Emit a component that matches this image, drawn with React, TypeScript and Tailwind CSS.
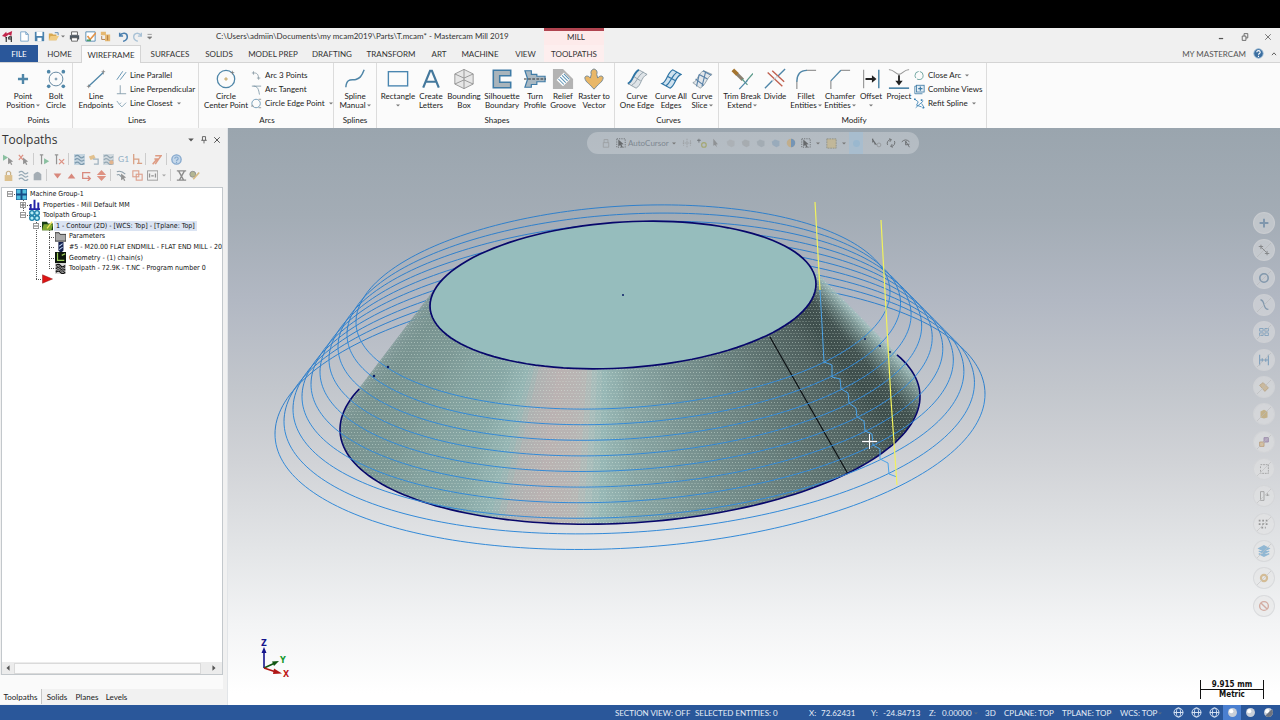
import React from "react";

type Ellipse = { cx: number; cy: number; w: number; skew: number; h: number };

const TOP: Ellipse = { cx: 623, cy: 295, w: 193, skew: -11, h: 73 };
const BASE: Ellipse = { cx: 630, cy: 413, w: 290, skew: -16.5, h: 110 };
const PASSES: Ellipse[] = Array.from({ length: 10 }, (_, i) => {
  const k = i / 9;
  return { cx: 623 + 7 * k, cy: 307 + 107 * k, w: 267 + 88 * k, skew: -15 - 5 * k, h: 101 + 33 * k };
});

const at = (e: Ellipse, deg: number) => {
  const t = (deg * Math.PI) / 180;
  const u = Math.cos(t);
  const v = Math.sin(t);
  return [e.cx + e.w * u, e.cy + e.skew * u + e.h * v];
};
const arc = (e: Ellipse, from: number, to: number) => {
  const n = 120;
  return Array.from({ length: n + 1 }, (_, i) => {
    const [x, y] = at(e, from + ((to - from) * i) / n);
    return `${i ? "L" : "M"}${x.toFixed(2)} ${y.toFixed(2)}`;
  }).join("");
};

const SHADES: [number, number[]][] = [
  [-20, [164, 188, 190]],
  [-14, [160, 190, 190]],
  [-6, [140, 168, 166]],
  [2, [106, 130, 128]],
  [11, [66, 82, 80]],
  [20, [62, 78, 76]],
  [30, [78, 95, 93]],
  [45, [92, 112, 110]],
  [60, [108, 131, 129]],
  [75, [122, 148, 146]],
  [88, [138, 166, 164]],
  [95, [152, 184, 182]],
  [98, [170, 188, 186]],
  [101, [184, 182, 180]],
  [108, [186, 178, 178]],
  [114, [176, 178, 178]],
  [118, [150, 182, 180]],
  [126, [136, 168, 166]],
  [138, [132, 162, 159]],
  [150, [124, 152, 149]],
  [170, [120, 147, 144]],
  [197, [126, 152, 150]],
];
const shade = (deg: number) => {
  let i = 0;
  while (i < SHADES.length - 2 && SHADES[i + 1][0] < deg) i++;
  const [a, ca] = SHADES[i];
  const [b, cb] = SHADES[i + 1];
  const k = Math.min(1, Math.max(0, (deg - a) / (b - a)));
  const c = ca.map((v, j) => Math.round(v + (cb[j] - v) * k));
  return `rgb(${c.join(",")})`;
};
const FACETS = Array.from({ length: 144 }, (_, i) => {
  const a = -19.3 + i * 1.5;
  const b = Math.min(196.7, a + 1.8);
  const pts = [at(TOP, a), at(BASE, a), at(BASE, b), at(TOP, b)];
  return { points: pts.map((p) => p.map((n) => n.toFixed(1)).join(",")).join(" "), fill: shade(a) };
});
const SIDE = `${arc(BASE, -19.3, 196.7)}${arc(TOP, 196.7, -19.3).replace("M", "L")}Z`;

function Model() {
  return (
    <svg className="block h-full w-full" viewBox="228 128 1052 577" role="img" aria-label="Part with toolpath">
      <defs>
        <pattern id="dots" width="6" height="6" patternUnits="userSpaceOnUse">
          <path d="M0 0h1v1h-1zM3 0h1v1h-1zM1.500 3h1v1h-1zM4.500 3h1v1h-1z" fill="#dff0e4" />
        </pattern>
      </defs>
      <g fill="none" stroke="#2f80cc" strokeWidth="1">
        {PASSES.map((p, i) => (
          <path key={i} d={arc(p, 180, 360)} />
        ))}
      </g>
      {FACETS.map((f, i) => (
        <polygon key={i} points={f.points} fill={f.fill} />
      ))}
      <path d={SIDE} fill="url(#dots)" opacity="0.42" />
      <path d={arc(BASE, -23, 201)} fill="none" stroke="#07076b" strokeWidth="1.600" />
      <path d={arc(TOP, 0, 360)} fill="#96bdbd" stroke="#07076b" strokeWidth="1.700" />
      <path d="M770 337L848 474" stroke="#0b0f12" strokeWidth="1.200" />
      <g fill="none" stroke="#338ad8" strokeWidth="1">
        {PASSES.map((p, i) => (
          <path key={i} d={arc(p, 0, 180)} />
        ))}
        <path
          stroke="#4ba3e8"
          d="M820 290L822 325L824 362L832 365V377L840 379L841 389L848 393L849 403L856 408L857 417L864 421L865 431L872 434L873 445L880 449V459L888 463L889 474L897 477"
        />
      </g>
      <path d="M815 202L820 290M881 220L891 400L897 485" fill="none" stroke="#f1f25c" strokeWidth="1.200" />
      <g fill="#0a1c66">
        <circle cx="623" cy="295" r="1" />
        <circle cx="388" cy="367" r="1.200" />
        <circle cx="374" cy="376" r="1.200" />
        <circle cx="865" cy="339" r="1" />
        <circle cx="880" cy="346" r="1" />
        <circle cx="890" cy="352" r="1" />
      </g>
      <path d="M862 441.500H877M869.500 434V449" stroke="#1c2426" strokeWidth="3" opacity="0.5" />
      <path d="M862 441.500H877M869.500 434V449" stroke="#fff" strokeWidth="1.300" />
    </svg>
  );
}

/* ---------- icons ---------- */

const S = "#4f86a8";
const big: Record<string, React.ReactNode> = {
  point: <path d="M12 6.500v11M6.500 12h11" stroke={S} strokeWidth="2.600" />,
  bolt: (
    <g stroke="#5a7f9a" fill="none">
      <circle cx="12" cy="12" r="7.500" />
      <path d="M12 10.500v3M10.500 12h3" />
      <g fill={S} stroke="none">
        <circle cx="4" cy="4" r="2" />
        <circle cx="20" cy="4" r="2" />
        <circle cx="4" cy="20" r="2" />
        <circle cx="20" cy="20" r="2" />
      </g>
    </g>
  ),
  line: (
    <g stroke={S}>
      <path d="M4 20L20 5" strokeWidth="1.400" />
      <path d="M18 4h4M20 2v5M2 20h4M4 18v4" stroke="#777" strokeWidth=".8" />
    </g>
  ),
  circle: (
    <g fill="none" stroke={S}>
      <circle cx="12" cy="12" r="9.500" strokeWidth="1.400" />
      <path d="M12 10v4M10 12h4" stroke="#c09a50" />
      <path d="M19 3v4M17 5h4" stroke="#777" strokeWidth=".8" />
    </g>
  ),
  spline: <path d="M2 21C3 10 9 14 13 12.500S19 10 22 2" fill="none" stroke={S} strokeWidth="1.600" />,
  rect: <rect x="1.500" y="4" width="21" height="15.500" fill="none" stroke="#4a86b0" strokeWidth="1.500" />,
  letter: <path d="M3.500 21.500L11 3H13L20.500 21.500M6.500 15H17.500" fill="none" stroke="#44789c" strokeWidth="2.400" />,
  box: (
    <g fill="#e6e6e6" stroke="#8b8b8b" strokeWidth=".9">
      <path d="M12 1.500L22 6.500V17.500L12 22.500L2 17.500V6.500Z" />
      <path d="M2 6.500L12 11L22 6.500M12 11V22.500M2 17.500L12 13L22 17.500M12 1.500V11" fill="none" />
    </g>
  ),
  silhouette: (
    <path d="M2.500 2.500H21.500V8.500H9.500V15.500H21.500V21.500H2.500Z" fill="#a9b4bb" stroke="#3f7ba6" strokeWidth="1.700" />
  ),
  turn: (
    <g>
      <path d="M1 3H8V7H14V9H23V15H14V18H8V21H1L4 12Z" fill="#a9b8c2" stroke="#3f7ba6" strokeWidth="1.300" />
      <path d="M0 12H24" stroke="#333" strokeDasharray="3 1.500" strokeWidth="1.200" />
    </g>
  ),
  relief: (
    <g>
      <path d="M1 1H12L23 12V23H1Z" fill="#b3b3b3" />
      <path d="M5 13L13 5L20 12L12 20Z" fill="#fff" />
      <path d="M7 12l6 6M9 10l6 6M11 8l6 6M13 6.500l6 6" stroke="#5c93b5" strokeWidth="1.100" />
    </g>
  ),
  raster: (
    <path
      d="M12 1C15 2 16 4 15 7L16 11C18 8 22 8 22 11C21 16 17 17 16 19C14 20 14 22 12 23C10 22 10 20 8 19C7 17 3 16 2 11C2 8 6 8 8 11L9 7C8 4 9 2 12 1Z"
      fill="#e9b767"
      stroke="#6d8291"
      strokeWidth="1"
    />
  ),
  curve1: (
    <g fill="#dfe4e8" stroke="#8796a0" strokeWidth=".9">
      <path d="M2 17C8 15 7 6 14 2L23 7C16 10 17 19 11 22Z" />
      <path d="M6 19C12 16 12 9 19 4.500M8 9L16 14" fill="none" />
      <path d="M2 17C8 15 7 6 14 2" fill="none" stroke="#2f75a5" strokeWidth="2" />
    </g>
  ),
  curve2: (
    <g fill="#cfe2ef" stroke="#2f75a5" strokeWidth="1.300">
      <path d="M2 17C8 15 7 6 14 2L23 7C16 10 17 19 11 22Z" />
      <path d="M6.500 19.500C12 16 12 9 18.500 4.500M8 9L17 14" fill="none" />
    </g>
  ),
  curve3: (
    <g fill="#e2e6ea" stroke="#8796a0" strokeWidth=".9">
      <path d="M2 16C8 14 7 6 14 3L23 7C17 10 17 18 10 22Z" />
      <path d="M5 12l9 7M9 7l9 5M13 3l9 5M9 7l-3 13M16 4l-4 16" fill="none" stroke="#5781a8" strokeWidth="1.200" />
    </g>
  ),
  trim: (
    <g fill="none">
      <path d="M6 6L13 13" stroke="#8b8070" strokeWidth="3.600" />
      <path d="M2 2L7 7" stroke="#a5752f" strokeWidth="4" />
      <path d="M12 12L18 18.500M17 14L24 6" stroke="#5a9a8a" strokeWidth="1.300" />
      <path d="M9 23L18 13.500" stroke={S} strokeWidth="1.400" />
    </g>
  ),
  divide: (
    <g strokeWidth="1.500" fill="none">
      <path d="M1 22L9 14M15 9L23 1" stroke={S} />
      <path d="M4 5L20 20M9 3L22 15" stroke="#c0604f" />
      <path d="M9 14L15 9" stroke="#b9c7ce" strokeDasharray="2 1" />
    </g>
  ),
  fillet: (
    <g fill="none" strokeWidth="1.400">
      <path d="M2 23V14M12 2.500H23" stroke="#999" />
      <path d="M2 15C2 7 6 2.500 13 2.500" stroke={S} />
    </g>
  ),
  chamfer: (
    <g fill="none" strokeWidth="1.400">
      <path d="M2 23V14M13 2.500H23" stroke="#999" />
      <path d="M2 14L13 2.500" stroke={S} />
    </g>
  ),
  offset: (
    <g>
      <path d="M4 2V22" stroke="#888" strokeWidth="1.100" />
      <path d="M20.500 2V22" stroke={S} strokeWidth="1.600" />
      <path d="M6 11H13V8L18 12L13 16V13H6Z" fill="#222" />
    </g>
  ),
  project: (
    <g>
      <path d="M1 2C6 1 8 7 12 7S18 1 23 2" fill="none" stroke="#999" strokeWidth="1.200" />
      <path d="M11 8H13V14H16L12 19L8 14H11Z" fill="#222" />
      <path d="M1 22H23" stroke={S} strokeWidth="1.800" />
    </g>
  ),
};

const small: Record<string, React.ReactNode> = {
  parallel: <path d="M1 11L8 1M5 11L12 2" stroke={S} fill="none" />,
  perp: <path d="M1 11H12M5 1V11" stroke="#7d97a6" fill="none" />,
  closest: <path d="M1 3L4 7L7 10M7 10L12 5M4 7L6 5" stroke="#7f9fb2" fill="none" />,
  arc3: <path d="M1 3H4C8 3 9 6 9 11M7 9h4M3 1v4" stroke="#8b9ba6" fill="none" />,
  arct: <path d="M1 2H12M3 2C8 2 9 6 10 12" stroke="#7d97a6" fill="none" />,
  edge: (
    <g fill="none" stroke="#6592af">
      <circle cx="6" cy="6" r="5" />
      <path d="M0 9h3M9 1h3M9 11h3" stroke="#888" />
    </g>
  ),
  closearc: <circle cx="6" cy="6" r="4.800" fill="none" stroke="#5e9a94" strokeDasharray="10 1.500" />,
  combine: (
    <g fill="none" stroke="#3f7ba6">
      <path d="M1 11V2H3M1 11H10" />
      <rect x="3" y="1" width="9" height="8" fill="#e4eef5" />
      <path d="M7.500 2.500v5M5 5h5" strokeWidth="1.400" />
    </g>
  ),
  refit: (
    <g fill="none" stroke="#3f84b5">
      <path d="M1 1L5 4L3 8L9 10M2 11L11 3M9 6l3 5" />
      <path d="M0 1h2M10 11h2M8 2h2" strokeWidth="2" />
    </g>
  ),
};

function Caret({ className = "" }: { className?: string }) {
  return (
    <svg className={`inline-block h-[3px] w-[4px] ${className}`} viewBox="0 0 4 3" aria-hidden="true">
      <path d="M0 .5H4L2 2.500Z" fill="#777" />
    </svg>
  );
}

type Tool = { icon: string; a: string; b?: string; caret?: boolean; w: string };

function BigTool({ icon, a, b, caret, w }: Tool) {
  return (
    <button className={`flex shrink-0 flex-col items-center ${w}`}>
      <svg className="h-[22px] w-[22px]" viewBox="0 0 24 24" aria-hidden="true">
        {big[icon]}
      </svg>
      <span className="mt-[2px] whitespace-nowrap">{a}</span>
      <span className="flex h-[9px] items-center gap-px whitespace-nowrap">
        {b}
        {caret && <Caret />}
      </span>
    </button>
  );
}

function SmallTool({ icon, label, caret }: { icon: string; label: string; caret?: boolean }) {
  return (
    <button className="flex h-[14px] items-center gap-[3px] whitespace-nowrap">
      <svg className="h-[11px] w-[11px]" viewBox="0 0 13 12" aria-hidden="true">
        {small[icon]}
      </svg>
      {label}
      {caret && <Caret className="ml-px" />}
    </button>
  );
}

function Group({ name, w, children }: { name: string; w: string; children: React.ReactNode }) {
  return (
    <section aria-label={name} className={`flex shrink-0 flex-col border-r border-[#dcdcdc] ${w}`}>
      <div className="flex flex-1 pt-[5px]">{children}</div>
      <div className="pb-[3px] text-center">{name}</div>
    </section>
  );
}

function Ribbon() {
  return (
    <div className="flex h-[66px] border-t border-[#d4d4d4] bg-[#fbfbfb] text-[8px] leading-[9px] text-[#222]">
      <Group name="Points" w="w-[73px] pl-[5px]">
        <BigTool icon="point" a="Point" b="Position" caret w="w-[36px]" />
        <BigTool icon="bolt" a="Bolt" b="Circle" w="w-[30px]" />
      </Group>
      <Group name="Lines" w="w-[126px] pl-[3px]">
        <BigTool icon="line" a="Line" b="Endpoints" w="w-[40px]" />
        <div>
          <SmallTool icon="parallel" label="Line Parallel" />
          <SmallTool icon="perp" label="Line Perpendicular" />
          <SmallTool icon="closest" label="Line Closest" caret />
        </div>
      </Group>
      <Group name="Arcs" w="w-[135px] pl-[2px]">
        <BigTool icon="circle" a="Circle" b="Center Point" w="w-[50px]" />
        <div>
          <SmallTool icon="arc3" label="Arc 3 Points" />
          <SmallTool icon="arct" label="Arc Tangent" />
          <SmallTool icon="edge" label="Circle Edge Point" caret />
        </div>
      </Group>
      <Group name="Splines" w="w-[43px]">
        <BigTool icon="spline" a="Spline" b="Manual" caret w="w-[42px]" />
      </Group>
      <Group name="Shapes" w="w-[238px] pl-[3px]">
        <BigTool icon="rect" a="Rectangle" caret w="w-[36px]" />
        <BigTool icon="letter" a="Create" b="Letters" w="w-[30px]" />
        <BigTool icon="box" a="Bounding" b="Box" w="w-[36px]" />
        <BigTool icon="silhouette" a="Silhouette" b="Boundary" w="w-[40px]" />
        <BigTool icon="turn" a="Turn" b="Profile" w="w-[26px]" />
        <BigTool icon="relief" a="Relief" b="Groove" w="w-[30px]" />
        <BigTool icon="raster" a="Raster to" b="Vector" w="w-[32px]" />
      </Group>
      <Group name="Curves" w="w-[104px] pl-[4px]">
        <BigTool icon="curve1" a="Curve" b="One Edge" w="w-[36px]" />
        <BigTool icon="curve2" a="Curve All" b="Edges" w="w-[32px]" />
        <BigTool icon="curve3" a="Curve" b="Slice" caret w="w-[30px]" />
      </Group>
      <Group name="Modify" w="w-[268px] pl-[3px]">
        <BigTool icon="trim" a="Trim Break" b="Extend" caret w="w-[40px]" />
        <BigTool icon="divide" a="Divide" w="w-[26px]" />
        <BigTool icon="fillet" a="Fillet" b="Entities" caret w="w-[36px]" />
        <BigTool icon="chamfer" a="Chamfer" b="Entities" caret w="w-[32px]" />
        <BigTool icon="offset" a="Offset" caret w="w-[30px]" />
        <BigTool icon="project" a="Project" w="w-[26px]" />
        <div className="pl-[2px]">
          <SmallTool icon="closearc" label="Close Arc" caret />
          <SmallTool icon="combine" label="Combine Views" />
          <SmallTool icon="refit" label="Refit Spline" caret />
        </div>
      </Group>
    </div>
  );
}

const quick: { label: string; w: string; art: React.ReactNode }[] = [
  { label: "Mastercam", w: "w-[17px]", art: <g><path d="M0 6L5 1L5.500 3L12 0L11 6L8 4L4 7Z" fill="#c2264b" /><path d="M5 7v6M4 8h2M8 7h3v6M8 7v2.500h3" stroke="#222" strokeWidth="1.300" fill="none" /></g> },
  { label: "New", w: "w-[15px]", art: <path d="M2 1H8L11 4V12H2ZM8 1V4H11" fill="#fff" stroke="#6e9cc4" /> },
  { label: "Save", w: "w-[14px]", art: <g><path d="M1 1H12V12H1Z" fill="#4a82ad" /><path d="M3 1H10V6H3ZM4 8H9V12H4Z" fill="#fff" /></g> },
  { label: "Open", w: "w-[21px]", art: <g><path d="M1 3H5L6 4H10V11H1Z" fill="#d8a950" /><path d="M3 6H13L10 11H1Z" fill="#f0cc84" /><path d="M8 2h4v3" stroke="#4c7fa8" fill="none" /></g> },
  { label: "Print", w: "w-[16px]", art: <g><path d="M3 1H10V5H3Z" fill="#fff" stroke="#555" /><path d="M1 5H12V10H1Z" fill="#4d5862" /><path d="M3 8H10V12H3Z" fill="#fff" stroke="#555" /></g> },
  { label: "Save as", w: "w-[15px]", art: <g><path d="M1 1H12V12H1Z" fill="#fff" stroke="#4a82ad" /><path d="M3 6L6 10L13 2" stroke="#e3944a" strokeWidth="2" fill="none" /><path d="M2 11h5" stroke="#4a9a6a" strokeWidth="2" /></g> },
  { label: "Zip2Go", w: "w-[18px]", art: <g><path d="M1 1H7V5H1ZM6 4H12V12H6Z" fill="#e5b872" /><path d="M2 6V10H6M9 5v6" stroke="#a86f3a" fill="none" /></g> },
  { label: "Undo", w: "w-[14px]", art: <path d="M2 2V6H6M2 6C5 1 11 2 11 7C11 10 8 12 6 12" fill="none" stroke="#4a7fae" strokeWidth="1.800" /> },
  { label: "Redo", w: "w-[13px]", art: <path d="M11 2V6H7M11 6C8 1 2 2 2 7C2 10 5 12 7 12" fill="none" stroke="#a9c2d6" strokeWidth="1.600" /> },
  { label: "Customize", w: "w-[9px]", art: <path d="M3 4H8M3 7H8L5.500 9.500Z" fill="#777" stroke="#777" strokeWidth=".8" /> },
];

function Pic({ children, size = "h-[11px] w-[11px]" }: { children: React.ReactNode; size?: string }) {
  return (
    <svg className={`shrink-0 ${size}`} viewBox="0 0 13 13" aria-hidden="true">
      {children}
    </svg>
  );
}

function TitleBar() {
  return (
    <header className="flex h-[17px] bg-[#f0f0f0] text-[8px] text-[#333]">
      <div className="flex w-[216px] items-center">
        {quick.map((q) => (
          <button key={q.label} aria-label={q.label} className={`flex shrink-0 items-center pl-[2px] ${q.w}`}>
            <Pic>{q.art}</Pic>
            {q.label === "Open" && <Caret className="ml-[2px] shrink-0" />}
          </button>
        ))}
      </div>
      <h1 className="w-[328px] leading-[17px]">C:\Users\admiin\Documents\my mcam2019\Parts\T.mcam* - Mastercam Mill 2019</h1>
      <div className="w-[60px] border-t-3 border-[#b04450] bg-[#fdeaea] pl-1 text-center leading-[12px]">MILL</div>
      <div className="ml-auto flex w-[68px] items-center justify-between pr-[8px] pl-[5px]">
        <button aria-label="Minimize">
          <Pic size="h-2 w-2"><path d="M3 9h7" stroke="#555" strokeWidth="2" /></Pic>
        </button>
        <button aria-label="Restore">
          <Pic size="h-2 w-2"><path d="M2 5H8V12H2ZM5 5V1H11V8H8" fill="none" stroke="#666" strokeWidth="1.500" /></Pic>
        </button>
        <button aria-label="Close">
          <Pic size="h-2 w-2"><path d="M2 2L11 11M11 2L2 11" stroke="#666" strokeWidth="1.400" /></Pic>
        </button>
      </div>
    </header>
  );
}

const tabs: [string, string][] = [
  ["FILE", "w-[38px] bg-[#2a579a] text-white"],
  ["HOME", "w-[43px]"],
  ["WIREFRAME", "w-[60px] border-x border-t border-[#d4d4d4] bg-[#fbfbfb] -mb-px"],
  ["SURFACES", "w-[58px]"],
  ["SOLIDS", "w-[40px]"],
  ["MODEL PREP", "w-[68px]"],
  ["DRAFTING", "w-[50px]"],
  ["TRANSFORM", "w-[68px]"],
  ["ART", "w-[28px]"],
  ["MACHINE", "w-[54px]"],
  ["VIEW", "w-[37px]"],
  ["TOOLPATHS", "w-[60px] bg-[#fdeeee]"],
];

function TabBar() {
  return (
    <nav className="relative flex h-[17px] bg-[#f0f0f0] text-[8px] text-[#333]">
      {tabs.map(([t, c]) => (
        <button key={t} className={`flex shrink-0 items-center justify-center whitespace-nowrap ${c}`}>
          {t}
        </button>
      ))}
      <div className="ml-auto flex items-center gap-[7px] pr-[3px] text-[#555]">
        <button className="whitespace-nowrap">MY MASTERCAM</button>
        <button aria-label="Help">
          <Pic>
            <circle cx="6.500" cy="6.500" r="5.500" fill="#3b6ea0" stroke="#8fb2d0" />
            <path d="M4.500 5C4.500 2.500 8.500 2.500 8.500 5C8.500 6.500 6.500 6.500 6.500 8M6.500 9.300v1.200" stroke="#fff" fill="none" strokeWidth="1.300" />
          </Pic>
        </button>
        <button aria-label="Collapse ribbon">
          <Pic size="h-[6px] w-[6px]"><path d="M2 9L6.500 4L11 9" fill="none" stroke="#555" strokeWidth="2" /></Pic>
        </button>
      </div>
    </nav>
  );
}

/* ---------- toolpath manager ---------- */

const waves = (c: string) => <path d="M1 3Q4 0 6.500 3T12 3M1 7Q4 4 6.500 7T12 7M1 11Q4 8 6.500 11T12 11" stroke={c} fill="none" strokeWidth="1.500" />;
const pointer = <path d="M6 4L12 9L9.500 9.500L11 12.500L9.500 13L8.500 10.500L6 12Z" fill="#555" />;

type Mini = [string, string, React.ReactNode] | null;
const rowA: Mini[] = [
  ["Select all operations", "w-[15px]", <g key="a"><path d="M0 1L6 4L0 8Z" fill="#46a06c" />{pointer}</g>],
  ["Select dirty operations", "w-[15px]", <g key="a"><path d="M1 1L6 7M6 1L1 7" stroke="#d0533c" strokeWidth="1.500" />{pointer}</g>],
  null,
  ["Regenerate all", "w-[15px]", <g key="a"><path d="M1 1h4M3 1v11" stroke="#555" strokeWidth="1.400" /><path d="M6 5L12 8.500L6 12Z" fill="#46a06c" /></g>],
  ["Regenerate dirty", "w-[14px]", <g key="a"><path d="M1 1h4M3 1v11" stroke="#555" strokeWidth="1.400" /><path d="M6 6L12 12M12 6L6 12" stroke="#d0533c" strokeWidth="1.500" /></g>],
  null,
  ["Backplot", "w-[14px]", <g key="a"><rect width="13" height="13" fill="#a9c4d6" />{waves("#2e5f80")}</g>],
  ["Verify", "w-[15px]", <g key="a"><path d="M1 3L7 1L9 5L3 7Z" fill="#d9a24e" /><path d="M6 6H12V12H7" fill="none" stroke="#6c8ba0" strokeWidth="1.500" /></g>],
  ["Simulator", "w-[15px]", <g key="a"><rect width="13" height="13" fill="#bccad3" />{waves("#58788c")}<circle cx="10" cy="10" r="2.500" fill="#d98c4e" /></g>],
  ["Post", "w-[15px]", <text key="a" x="0" y="10" fontSize="10" fill="#4a7da5">G1</text>],
  ["Highfeed", "w-[12px]", <g key="a"><path d="M2 0V12M2 6H8V11M6 11H12" stroke="#c96b3c" fill="none" strokeWidth="1.500" /></g>],
  null,
  ["Edit", "w-[15px]", <path key="a" d="M2 12L7 6H4M5 2H12L9 6L5 12" stroke="#d2643c" strokeWidth="1.800" fill="none" />],
  null,
  ["Help", "w-[13px]", <g key="a"><circle cx="6.500" cy="6.500" r="5.500" fill="#a5c6e6" stroke="#3b76b5" strokeWidth="1.500" /><path d="M4.500 5.500C4.500 3 8.500 3 8.500 5.500C8.500 7 6.500 6.500 6.500 8.500M6.500 9.500v1" stroke="#3b76b5" fill="none" strokeWidth="1.300" /></g>],
];
const rowB: Mini[] = [
  ["Lock", "w-[15px]", <g key="a"><rect x="2" y="6" width="9" height="7" fill="#cfa04c" /><path d="M4 6V3Q6.500 0 9 3V6" fill="none" stroke="#a98442" strokeWidth="1.400" /></g>],
  ["Toggle display", "w-[14px]", <g key="a">{waves("#5d7c90")}</g>],
  ["Ghost", "w-[14px]", <path key="a" d="M2 12V5Q6.500 -1 11 5V12Z" fill="#71818c" />],
  null,
  ["Move down", "w-[14px]", <path key="a" d="M2 4H11L6.500 10Z" fill="#c9432f" />],
  ["Move up", "w-[15px]", <path key="a" d="M2 10H11L6.500 4Z" fill="#c9432f" />],
  ["Insert", "w-[15px]", <path key="a" d="M11 3H2V10H10M8 7L11 10L8 13" fill="none" stroke="#c9432f" strokeWidth="1.500" />],
  ["Scroll", "w-[14px]", <path key="a" d="M6.500 0L12 6H1ZM6.500 13L12 7H1Z" fill="#d2543a" />],
  null,
  ["Display selected", "w-[15px]", <g key="a"><path d="M1 2Q6 0 11 5M1 6Q4 4 6 8" stroke="#4d6a7c" fill="none" strokeWidth="1.300" />{pointer}</g>],
  ["Associative", "w-[16px]", <g key="a" fill="none" stroke="#d06a4a" strokeWidth="1.300"><rect x="1" y="1" width="7" height="7" /><rect x="5" y="5" width="7" height="7" /></g>],
  ["Options", "w-[23px]", <g key="a"><rect x="0.700" y="1" width="12" height="11" fill="none" stroke="#555" /><path d="M3 4v5M5 7h3M10 4v5" stroke="#555" strokeWidth="1.500" /></g>],
  null,
  ["Machine", "w-[14px]", <path key="a" d="M1 1H12M1 12H12M3 1L9 12M10 1L4 12" stroke="#4a4a4a" strokeWidth="1.600" />],
  ["Options tool", "w-[13px]", <g key="a"><circle cx="4.500" cy="5" r="3.500" fill="#8a8f55" stroke="#4a4a4a" /><path d="M5 11L12 3" stroke="#c99a3d" strokeWidth="2" /></g>],
];

function MiniBar({ items }: { items: Mini[] }) {
  return (
    <div className="flex h-4 items-center pl-px opacity-60">
      {items.map((m, i) =>
        m ? (
          <button key={i} aria-label={m[0]} className={`flex shrink-0 items-center justify-center ${m[1]}`}>
            <Pic>{m[2]}</Pic>
            {m[0] === "Options" && <Caret className="ml-[4px]" />}
          </button>
        ) : (
          <span key={i} className="mr-[3px] ml-[2px] h-3 w-px shrink-0 bg-[#b5b5b5]" />
        )
      )}
    </div>
  );
}

const tree: { pad: string; box?: string; label: string; sel?: boolean; art: React.ReactNode }[] = [
  { pad: "pl-[5px]", box: "-", label: "Machine Group-1", art: <path d="M0 0H6V6H0ZM7 0H13V6H7ZM0 7H6V13H0ZM7 7H13V13H7Z" fill="#52bfe0" stroke="#174c86" strokeWidth="1.300" /> },
  { pad: "pl-[18px]", box: "+", label: "Properties - Mill Default MM", art: <path d="M2 12V6M6.500 12V1M11 12V4M0 12H13" stroke="#2323a8" strokeWidth="2.300" /> },
  { pad: "pl-[18px]", box: "-", label: "Toolpath Group-1", art: <g fill="#b7ecf5" stroke="#1b7fa8" strokeWidth="1.600"><circle cx="3.500" cy="3.500" r="2.700" /><circle cx="9.500" cy="3.500" r="2.700" /><circle cx="3.500" cy="9.500" r="2.700" /><circle cx="9.500" cy="9.500" r="2.700" /></g> },
  { pad: "pl-[31px]", box: "-", label: "1 - Contour (2D) - [WCS: Top] - [Tplane: Top]", sel: true, art: <g><path d="M0 2H6L7 4H13V12H0Z" fill="#173d17" /><path d="M2 5H13L11 12H0Z" fill="#7fa832" /><path d="M6 10L12 2" stroke="#eee45a" strokeWidth="1.600" /></g> },
  { pad: "pl-[53px]", label: "Parameters", art: <path d="M0 2H5L6 4H13V12H0Z" fill="#aaa" stroke="#222" /> },
  { pad: "pl-[53px]", label: "#5 - M20.00 FLAT ENDMILL - FLAT END MILL - 20", art: <g><path d="M4 0H10V10L7 13L4 10Z" fill="#14204f" /><path d="M5 5L9 2M5 9L9 6" stroke="#b9d2f2" strokeWidth="1.200" /></g> },
  { pad: "pl-[53px]", label: "Geometry - (1) chain(s)", art: <g><path d="M0 0H13V13H0Z" fill="#0c160c" /><path d="M3 1V10H11M8 4L12 2" stroke="#9fcf5a" fill="none" strokeWidth="1.400" /></g> },
  { pad: "pl-[53px]", label: "Toolpath - 72.9K - T.NC - Program number 0", art: <g><path d="M0 0H13V13H0Z" fill="#d7d7d7" />{waves("#111")}<path d="M1 5Q4 2 6.500 5T12 5M1 9Q4 6 6.500 9T12 9" stroke="#111" fill="none" /></g> },
];

function Tree() {
  return (
    <div className="relative flex-1 overflow-hidden font-['DejaVu_Sans_Condensed','DejaVu_Sans',sans-serif] text-[7px] text-[#111]">
      <svg className="absolute top-0 left-0 h-[100px] w-[60px]" viewBox="0 0 60 100" aria-hidden="true">
        <path
          d="M12 6.500H16M21.500 10V28M25 17.500H29M25 27.500H29M34.500 32V91M38 38.500H41M47.500 42V80M47 49.500H53M47 59.500H53M47 70.500H53M47 80.500H53M34 91.500H40"
          stroke="#555"
          strokeDasharray="1 1"
          fill="none"
        />
      </svg>
      <ul className="relative grid h-[96px] grid-rows-9 pt-px">
        {tree.map((t) => (
          <li key={t.label} className={`flex min-h-0 items-center whitespace-nowrap ${t.pad}`}>
            {t.box && (
              <button aria-label={t.box === "+" ? "Expand" : "Collapse"} className="mr-[3px] flex shrink-0">
                <svg className="h-[6px] w-[6px]" viewBox="0 0 6 6" aria-hidden="true">
                  <rect x=".5" y=".5" width="5" height="5" fill="#fff" stroke="#999" />
                  <path d={t.box === "+" ? "M1 3H5M3 1V5" : "M1 3H5"} stroke="#444" strokeWidth=".8" />
                </svg>
              </button>
            )}
            <Pic size="h-[11px] w-[11px]">{t.art}</Pic>
            <span className={`ml-px px-[2px] leading-[10px] ${t.sel ? "bg-[#dbe4f3]" : ""}`}>{t.label}</span>
          </li>
        ))}
        <li className="flex items-center pl-[40px]">
          <Pic size="h-[10px] w-[11px]"><path d="M0 1L13 6.500L0 12Z" fill="#dd1414" stroke="#8a0d0d" strokeWidth=".6" /></Pic>
        </li>
      </ul>
    </div>
  );
}

function Panel() {
  return (
    <aside className="flex w-[228px] shrink-0 flex-col border-r border-[#e2e5e8] bg-[#f1f1f1] pr-[4px]">
      <div className="flex h-[23px] items-center pr-[2px] pl-[2px] font-['Open_Sans',sans-serif] text-[#333]">
        <h2 className="flex-1 text-[12px]">Toolpaths</h2>
        <div className="flex gap-[5px]">
          <button aria-label="Menu"><Pic size="h-2 w-2"><path d="M2 4H11L6.500 9Z" fill="#555" /></Pic></button>
          <button aria-label="Pin"><Pic size="h-2 w-2"><path d="M4 1H9V7M4 1V7M2 7H11M6.500 7V12" stroke="#555" strokeWidth="1.400" fill="none" /></Pic></button>
          <button aria-label="Close panel"><Pic size="h-2 w-2"><path d="M2 2L11 11M11 2L2 11" stroke="#555" strokeWidth="1.600" /></Pic></button>
        </div>
      </div>
      <MiniBar items={rowA} />
      <MiniBar items={rowB} />
      <div className="mt-[4px] ml-px flex flex-1 flex-col border border-[#c3c8cc] bg-white">
        <Tree />
        <div className="flex h-3 items-center justify-between bg-[#ececec]">
          <button aria-label="Scroll left" className="flex w-3 justify-center"><Pic size="h-2 w-2"><path d="M9 2V11L4 6.500Z" fill="#555" /></Pic></button>
          <div className="mr-[5px] h-[11px] flex-1 border border-[#dadada] bg-[#fafafa]" />
          <button aria-label="Scroll right" className="flex w-4 justify-center"><Pic size="h-2 w-2"><path d="M4 2V11L9 6.500Z" fill="#555" /></Pic></button>
        </div>
      </div>
      <div className="h-[14px] bg-[#fafafa]" />
      <div className="flex h-[16px] items-center pb-px text-[8px] text-[#222]">
        <button className="h-full w-[42px] border-r border-[#c5c5c5] bg-[#fafafa]">Toolpaths</button>
        <button className="w-[30px]">Solids</button>
        <button className="w-[30px]">Planes</button>
        <button className="w-[29px]">Levels</button>
      </div>
    </aside>
  );
}

/* ---------- floating bars ---------- */

const solid = (c: string) => <path d="M1 5L5 2L11 4V10L7 12L2 9Z" fill={c} opacity=".5" />;
const cursorBox = (
  <g>
    <path d="M1 1H12V12H1Z" fill="none" stroke="#222" strokeDasharray="1.500 1.500" />
    <path d="M3 2L10 8L7 8.500L9 12L7 12.500L5.500 9L3 11Z" fill="#333" />
  </g>
);
const selection: [string, string, React.ReactNode][] = [
  ["Selection lock", "w-[14px]", <path key="s" d="M3 6H10V12H3ZM4 6V2H9V6" fill="none" stroke="#888" />],
  ["AutoCursor icon", "w-[15px]", cursorBox],
];
const selection2: [string, string, React.ReactNode][] = [
  ["Relative", "w-[15px]", <path key="s" d="M6.500 1V12M1 6.500H12M2 3v7M11 3v7" stroke="#888" strokeDasharray="2 1" fill="none" />],
  ["Fast point", "w-[15px]", <g key="s"><path d="M0 3h5M2.500 1v5" stroke="#333" /><circle cx="9" cy="9" r="3" fill="none" stroke="#9a9a3c" strokeWidth="1.500" /></g>],
  ["Pick", "w-[14px]", <path key="s" d="M3 1L9 8L6.500 8.500L8 12L5 9L3 10Z" fill="#777" />],
  ["Face", "w-[15px]", solid("#999")],
  ["Body", "w-[15px]", solid("#888")],
  ["Edge", "w-[15px]", solid("#7b8792")],
  ["Feature", "w-[15px]", solid("#5b84ab")],
  ["Globe", "w-[15px]", <g key="s"><circle cx="6.500" cy="6.500" r="5.500" fill="#caa56a" /><path d="M6.500 1A5.500 5.500 0 0 1 6.500 12Z" fill="#4b7cae" /></g>],
  ["Window mode", "w-[15px]", cursorBox],
];
const selection3: [string, string, React.ReactNode][] = [
  ["Verify selection", "w-[15px]", <g key="s"><path d="M0 1L5 8L3 7.500M1 1V6" stroke="#333" fill="none" strokeWidth="1.400" /><circle cx="9" cy="9" r="2.500" fill="none" stroke="#777" /></g>],
  ["Invert selection", "w-[14px]", <path key="s" d="M2 9A5 5 0 0 1 6 2M11 4A5 5 0 0 1 7 11M4 1L7 2L5 5M9 12L6 11L8 8" fill="none" stroke="#444" strokeWidth="1.300" />],
  ["Select last", "w-[15px]", <path key="s" d="M1 5Q6 0 11 5M6 4L11 12M6 4L6 9L11 8" fill="none" stroke="#444" strokeWidth="1.300" />],
];

function SelButtons({ items }: { items: [string, string, React.ReactNode][] }) {
  return (
    <>
      {items.map(([label, w, art]) => (
        <button key={label} aria-label={label} className={`flex shrink-0 justify-center opacity-60 ${w}`}>
          <Pic size="h-[10px] w-[10px]">{art}</Pic>
        </button>
      ))}
    </>
  );
}

function SelectionBar() {
  return (
    <div className="absolute top-1 left-[359px] flex h-[22px] w-[332px] items-center rounded-full bg-white/25 pl-3">
      <SelButtons items={selection} />
      <button className="flex w-[51px] items-center justify-between pr-[3px] text-[8px] whitespace-nowrap text-[#7d8790]">
        AutoCursor <Caret />
      </button>
      <SelButtons items={selection2} />
      <Caret className="ml-[3px] shrink-0" />
      <button aria-label="Selection settings" className="ml-[3px] flex w-[16px] shrink-0 justify-center opacity-55">
        <Pic><path d="M1 1H12V12H1Z" fill="#ccb478" stroke="#6d6a52" strokeDasharray="2 1" /></Pic>
      </button>
      <Caret className="ml-[3px] shrink-0" />
      <button aria-label="Select all" className="mr-[6px] ml-[3px] flex h-[22px] w-[14px] shrink-0 items-center justify-center bg-[#a3bed3]/70">
        <Pic size="h-[9px] w-[9px]"><circle cx="6.500" cy="6.500" r="5" fill="#9ab8cf" /></Pic>
      </button>
      <SelButtons items={selection3} />
    </div>
  );
}

const masks: [string, React.ReactNode][] = [
  ["Select all points", <path key="m" d="M7 2V12M2 7H12" stroke="#55789a" strokeWidth="2.200" />],
  ["Select all lines", <path key="m" d="M1 3H6M3.500 1V6M8 11H13M10.500 8V13M4 4L10 10" stroke="#555" fill="none" />],
  ["Select all arcs", <circle key="m" cx="7" cy="7" r="4.800" fill="none" stroke="#557896" strokeWidth="1.800" />],
  ["Select all splines", <path key="m" d="M3 1C9 2 5 12 12 12" fill="none" stroke="#557896" strokeWidth="1.500" />],
  ["Select all curves", <path key="m" d="M2 3H6V6H2ZM8 3H12V6H8ZM2 8H6V11H2ZM8 8H12V11H8Z" fill="none" stroke="#4b80ad" />],
  ["Select all dimensions", <path key="m" d="M2 1V13M12 1V13M2 7H12M5 5V9M9 5V9" fill="none" stroke="#4b80ad" strokeWidth="1.300" />],
  ["Select all surfaces", <path key="m" d="M2 5L6 2L12 8L8 12Z" fill="#c6a878" stroke="#a88858" />],
  ["Select all solids", <path key="m" d="M3 4L7 2L11 4V11L7 12L3 11Z" fill="#b89a55" />],
  ["Select all colors", <g key="m"><path d="M2 7H7V12H2Z" fill="#d8b47a" stroke="#a67a4a" /><path d="M7 2H12V7H7Z" fill="#9d86b0" stroke="#765a8c" /></g>],
  ["Select all result", <path key="m" d="M3 2H12V12H3M3 4V6M3 8V10" fill="none" stroke="#777" strokeDasharray="2 1" />],
  ["Select all groups", <path key="m" d="M3 2H7V12H3ZM9 6H13M11 4V7" fill="none" stroke="#777" />],
  ["Select all named", <path key="m" d="M1 3H13M1 7H13M4 11H9" stroke="#666" strokeWidth="2" strokeDasharray="2 2" />],
  ["Select by level", <path key="m" d="M7 1L13 4L7 7L1 4ZM1 7L7 10L13 7M1 10L7 13L13 10" fill="#5b9ac8" stroke="#5b9ac8" strokeWidth="1.300" />],
  ["Select advanced", <circle key="m" cx="7" cy="7" r="3.500" fill="none" stroke="#c8a060" strokeWidth="2.500" />],
  ["Clear selection", <path key="m" d="M7 2A5 5 0 1 0 7 12A5 5 0 1 0 7 2M3.500 3.500L10.500 10.500" fill="none" stroke="#c48372" strokeWidth="1.600" />],
];

function MaskBar() {
  return (
    <div className="absolute top-[84px] right-[5px] flex h-[405px] flex-col justify-between">
      {masks.map(([label, art], i) => (
        <button
          key={label}
          aria-label={label}
          className="flex h-[22px] w-[22px] items-center justify-center rounded-full border border-[#cfd1d3]/60 bg-[#e4e4e4]/45"
        >
          <svg className="h-[14px] w-[14px]" viewBox="-1 -1 16 16" aria-hidden="true" opacity=".6">
            {art}
            {i > 0 && i < 14 && <path d="M-1 15L15 -1" stroke="#aaa" strokeWidth=".7" />}
          </svg>
        </button>
      ))}
    </div>
  );
}

function Viewport() {
  return (
    <main className="relative min-w-0 flex-1 overflow-hidden bg-[linear-gradient(to_bottom,#9aa5ae_0%,#a3acb5_15%,#b2b8c3_30%,#c2c6cc_45%,#d1d3d7_58%,#e3e5e7_73%,#f3f4f5_86%,#ffffff_98%)]">
      <Model />
      <SelectionBar />
      <MaskBar />
      <svg className="absolute bottom-[24px] left-[28px] h-[44px] w-[40px]" viewBox="0 0 40 44" role="img" aria-label="Axes">
        <path d="M8 31V14" stroke="#14148c" strokeWidth="1.600" />
        <path d="M5.500 16L8 10L10.500 16Z" fill="#14148c" />
        <path d="M8 31L19 26" stroke="#115511" strokeWidth="1.600" />
        <path d="M16 24.500L23 24L18 29Z" fill="#115511" />
        <path d="M8 31L20 35" stroke="#b01616" strokeWidth="1.600" />
        <path d="M18 31.500L26 36.500L17 37Z" fill="#b01616" />
        <g fontSize="8" fontWeight="700" className="font-['DejaVu_Sans',sans-serif]">
          <text x="5" y="9" fill="#14148c">Z</text>
          <text x="24" y="26" fill="#159a30">Y</text>
          <text x="27" y="40" fill="#c01818">X</text>
        </g>
      </svg>
      <div className="absolute right-[16px] bottom-[6px] w-[64px] text-center font-['DejaVu_Sans_Condensed','DejaVu_Sans',sans-serif] text-[8px] leading-[9px] font-bold text-[#111]">
        <div className="border-x border-[#111]">9.915 mm</div>
        <div className="border-x border-t border-[#111]">Metric</div>
      </div>
    </main>
  );
}

const status: [string, string, boolean?][] = [
  ["SECTION VIEW: OFF", "w-[80px]"],
  ["SELECTED ENTITIES: 0", "w-[114px]"],
  ["X:", "w-[12px]"],
  ["72.62431", "w-[50px]"],
  ["Y:", "w-[12px]"],
  ["-24.84713", "w-[46px]"],
  ["Z:", "w-[13px]"],
  ["0.00000", "w-[43px]", true],
  ["3D", "w-[19px]"],
  ["CPLANE: TOP", "w-[58px]", true],
  ["TPLANE: TOP", "w-[58px]", true],
  ["WCS: TOP", "w-[49px]", true],
];
const views = ["Wireframe", "Dimmed wireframe", "No hidden", "Outline shaded", "Shaded", "Translucency"];

function StatusBar() {
  return (
    <footer className="flex h-[15px] items-center justify-end bg-[#2a579a] pr-[3px] text-[8px] text-[#e4ecf7]">
      {status.map(([t, w, caret]) => (
        <span key={t} className={`flex shrink-0 items-center justify-between pt-px whitespace-nowrap ${w}`}>
          {t}
          {caret && <Caret className="mr-[7px] opacity-60" />}
        </span>
      ))}
      {views.map((v, i) => (
        <button key={v} aria-label={v} className={`flex h-full w-[18px] shrink-0 items-center justify-center ${i === 3 ? "bg-[#4a7fd0]" : ""}`}>
          <Pic>
            {i < 3 ? (
              <g fill="none" stroke="#dbe6f5" strokeWidth="1.100">
                <circle cx="6.500" cy="6.500" r="5.300" />
                <ellipse cx="6.500" cy="6.500" rx="2.500" ry="5.300" />
                <path d="M1 6.500H12" />
              </g>
            ) : (
              <g>
                <circle cx="6.500" cy="6.500" r="5.300" fill="#c8cfd9" />
                <circle cx="5" cy="5" r="2.500" fill="#fff" />
                {i === 5 && <path d="M2.700 10.200L10.300 2.800A5.300 5.300 0 0 1 2.700 10.200Z" fill="#6d7480" />}
              </g>
            )}
          </Pic>
        </button>
      ))}
    </footer>
  );
}

export default function App() {
  return (
    <div className="flex h-screen flex-col overflow-hidden bg-black pt-7 font-['Lato','Open_Sans',sans-serif]">
      <TitleBar />
      <TabBar />
      <Ribbon />
      <div className="flex min-h-0 flex-1">
        <Panel />
        <Viewport />
      </div>
      <StatusBar />
    </div>
  );
}
